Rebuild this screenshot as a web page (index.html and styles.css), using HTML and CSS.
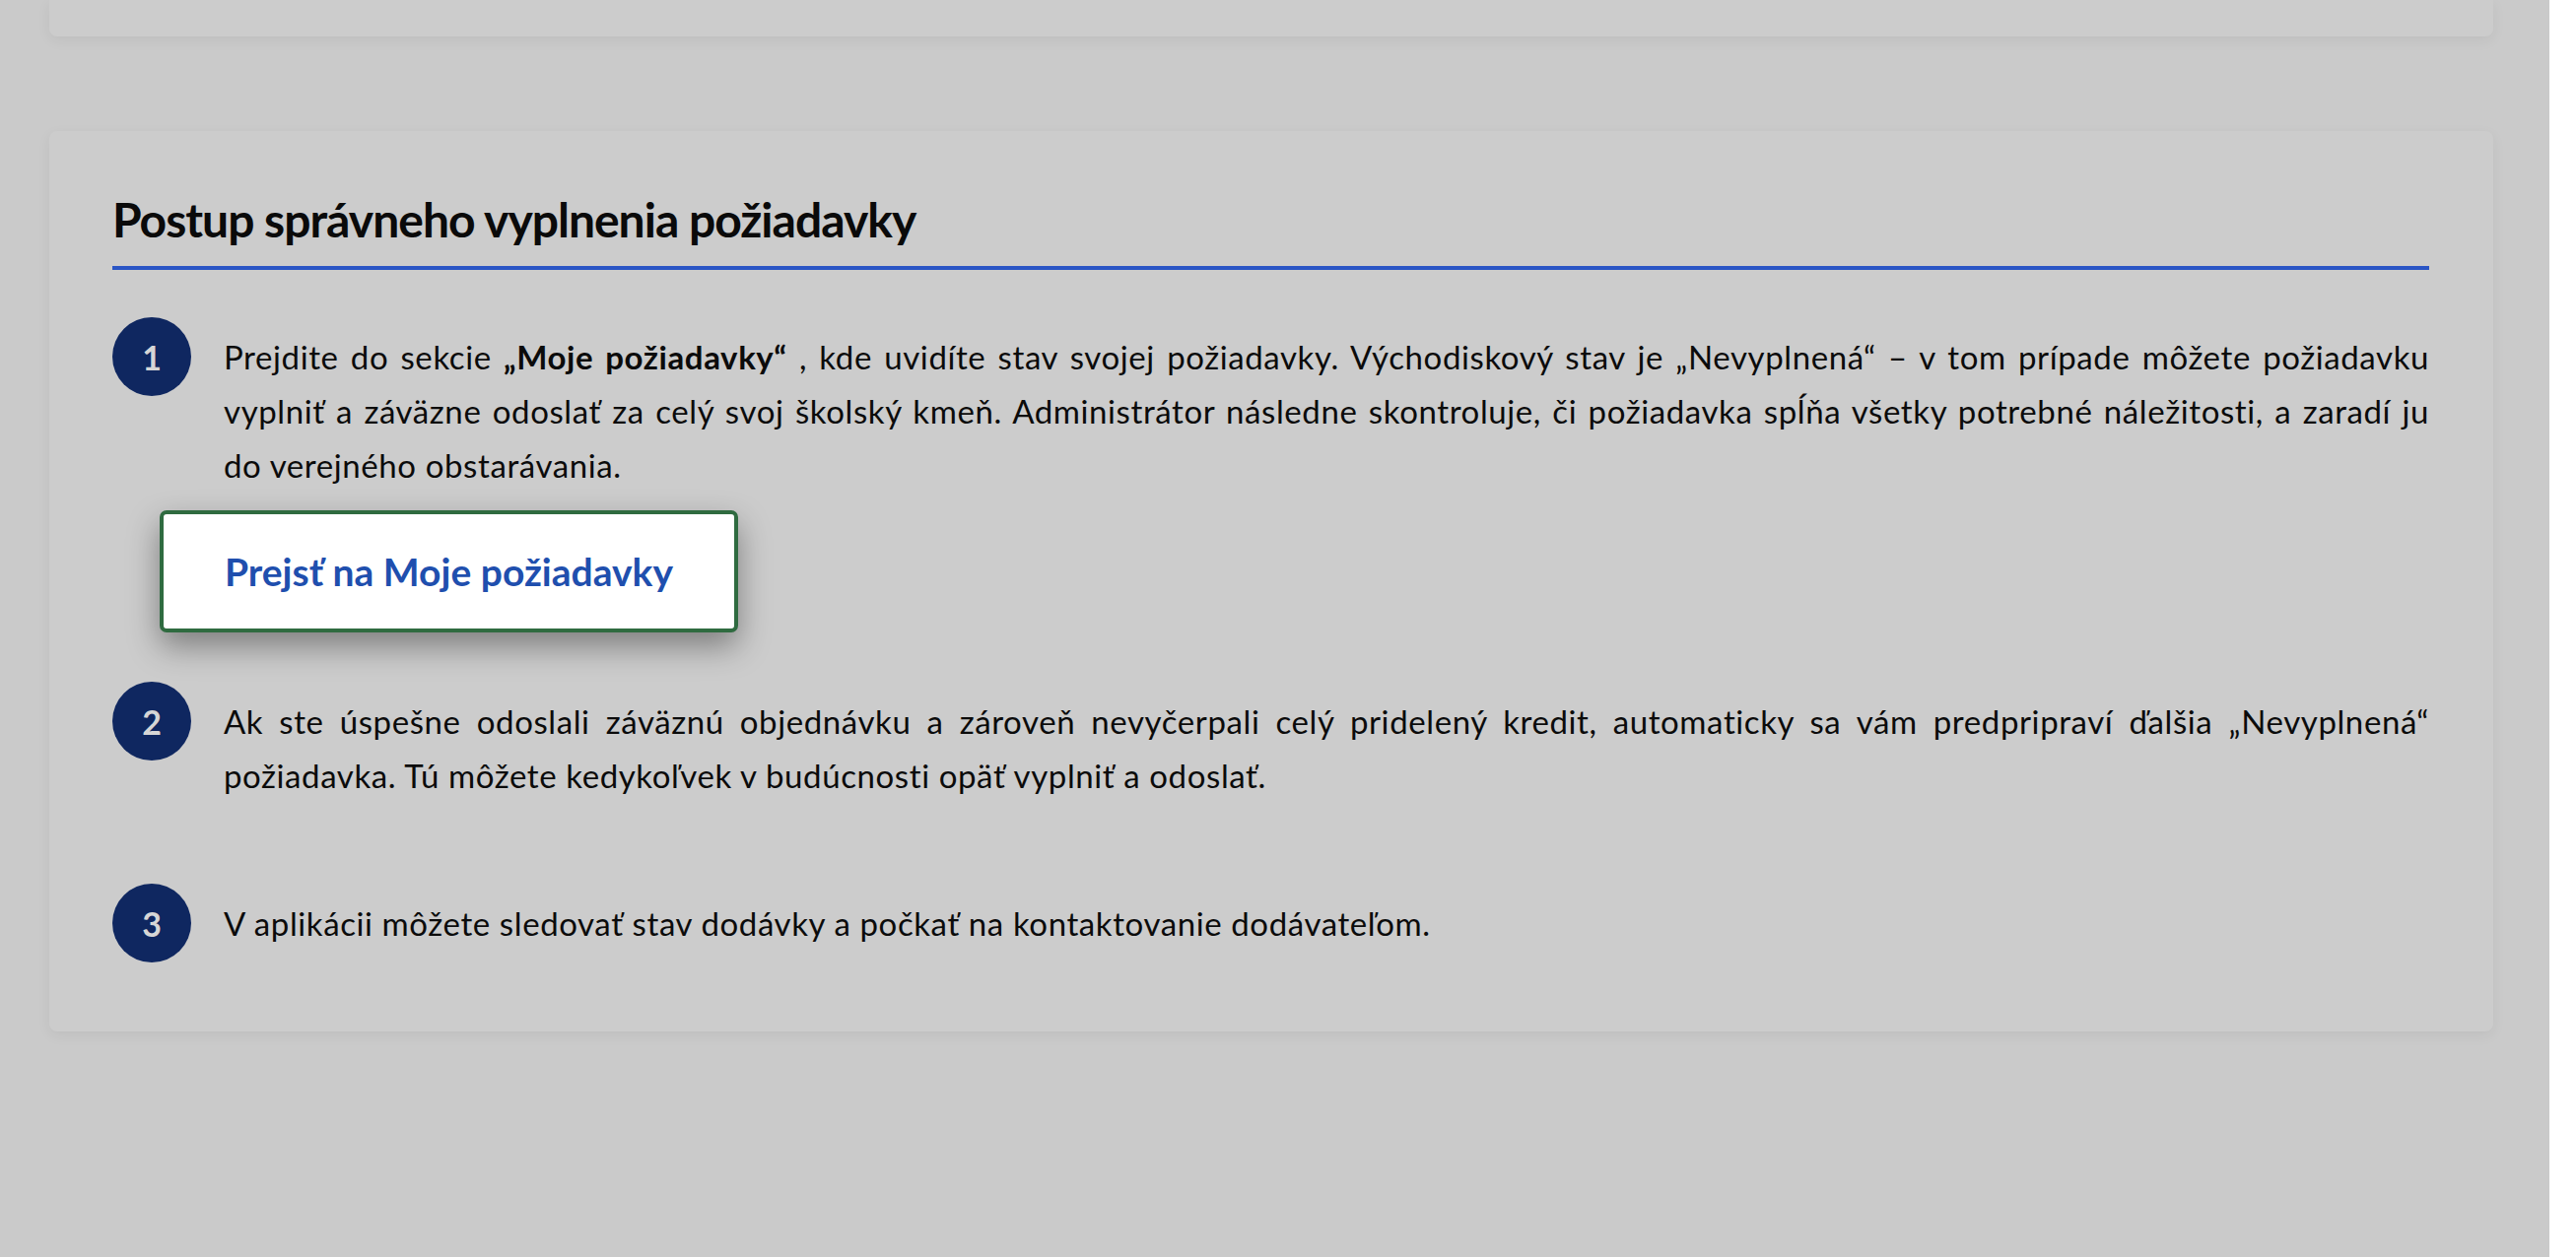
FILE: index.html
```html
<!DOCTYPE html>
<html lang="sk">
<head>
<meta charset="utf-8">
<title>Postup správneho vyplnenia požiadavky</title>
<link rel="stylesheet" href="styles.css">
</head>
<body>
<div class="page">
  <div class="card card-top"></div>
  <section class="card card-steps">
    <h2 class="title">Postup správneho vyplnenia požiadavky</h2>
    <div class="steps">
      <div class="step step-1">
        <div class="num">1</div>
        <p class="text">Prejdite do sekcie <strong>„Moje požiadavky“</strong> , kde uvidíte stav svojej požiadavky. Východiskový stav je „Nevyplnená“ – v tom prípade môžete požiadavku vyplniť a záväzne odoslať za celý svoj školský kmeň. Administrátor následne skontroluje, či požiadavka spĺňa všetky potrebné náležitosti, a zaradí ju do verejného obstarávania.</p>
      </div>
      <div class="cta-row">
        <a class="cta" href="#">Prejsť na Moje požiadavky</a>
      </div>
      <div class="step step-2">
        <div class="num">2</div>
        <p class="text">Ak ste úspešne odoslali záväznú objednávku a zároveň nevyčerpali celý pridelený kredit, automaticky sa vám predpripraví ďalšia „Nevyplnená“ požiadavka. Tú môžete kedykoľvek v budúcnosti opäť vyplniť a odoslať.</p>
      </div>
      <div class="step step-3">
        <div class="num">3</div>
        <p class="text">V aplikácii môžete sledovať stav dodávky a počkať na kontaktovanie dodávateľom.</p>
      </div>
    </div>
  </section>
</div>
</body>
</html>
```

FILE: styles.css
```css
html, body {
  margin: 0;
  padding: 0;
  background: #ffffff;
}

.page {
  width: 2587px;
  min-height: 1276px;
  box-sizing: border-box;
  background: #cacaca;
  padding-left: 50px;
  font-family: Lato, "Open Sans", sans-serif;
  color: #0b0b0b;
}

.card {
  width: 2480px;
  box-sizing: border-box;
  background: #cccccc;
  border-radius: 8px;
  box-shadow: 0 4px 14px rgba(0, 0, 0, 0.06);
}

.card-top {
  height: 37px;
  border-radius: 0 0 8px 8px;
}

.card-steps {
  margin-top: 96px;
  padding: 61px 65px 70px 64px;
}

.title {
  margin: 0;
  font-size: 48px;
  line-height: 58px;
  font-weight: 700;
  color: #0a0a0a;
  padding-bottom: 18px;
  border-bottom: 4px solid #2a55c5;
  letter-spacing: -1px;
}

.steps {
  display: flex;
  flex-direction: column;
  padding-top: 48px;
}

.step {
  display: flex;
  align-items: flex-start;
  gap: 33px;
}

.num {
  flex: 0 0 80px;
  width: 80px;
  height: 80px;
  border-radius: 50%;
  background: #0f2760;
  color: #d6d6d6;
  font-weight: 700;
  font-size: 34px;
  display: flex;
  align-items: center;
  justify-content: center;
}

.text {
  margin: 13px 0 0 0;
  flex: 1;
  font-size: 33px;
  line-height: 55px;
  letter-spacing: 0.6px;
  text-align: justify;
}

.text strong {
  font-weight: 700;
}

.cta-row {
  padding: 18px 0 0 48px;
  display: flex;
}

.cta {
  display: flex;
  align-items: center;
  justify-content: center;
  width: 587px;
  height: 124px;
  box-sizing: border-box;
  background: #ffffff;
  border: 4px solid #2f6b40;
  border-radius: 7px;
  box-shadow: 0 14px 32px rgba(0, 0, 0, 0.38);
  color: #1f4fae;
  font-size: 39px;
  font-weight: 700;
  text-decoration: none;
}

.step-2 {
  margin-top: 50px;
}

.step-3 {
  margin-top: 82px;
}
```
